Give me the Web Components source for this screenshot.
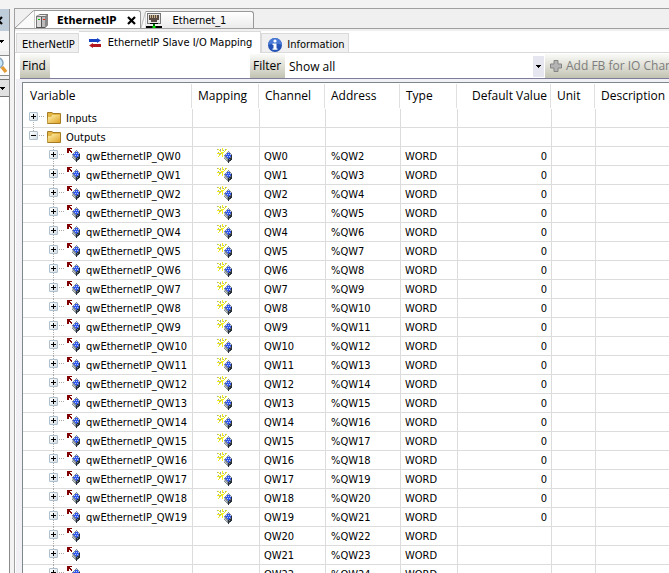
<!DOCTYPE html>
<html lang="en">
<head>
<meta charset="utf-8">
<title>EthernetIP</title>
<style>
  html, body {
    margin: 0;
    height: 100%;
    overflow: hidden;
  }
  body {
    background: #f3f3f3;
    color: #000;
    font: 11px/14px "DejaVu Sans Condensed", Tahoma, sans-serif;
  }
</style>
</head>
<body>
<editor-window></editor-window>

<script>
// 8x12 cube, shared by the output and the mapping icons
const cube = `
      <path d="M0 4 4 0l4 3v5l-4 4-4-4z" fill="#858d95"/>
      <path d="M4 7l4-4v5l-4 4z" fill="#2b3138"/>
      <path d="M1 4l3-3 3 2v2L4 8z" fill="#2f55ea"/>
      <path d="M4 1h1v1H4zM2 3h1v1H2zM4 3h1v1H4zM6 3h1v1H6zM3 5h1v1H3zM5 5h1v1H5z" fill="#b4caff"/>
      <path d="M0 5h1v2H0zM1 7h1v1H1zM2 8h1v1H2z" fill="#c2c9cf"/>
      <path d="M5 8h1v1H5zM6 6h1v1H6zM5 10h1v1H5z" fill="#74808c"/>`;

const icons = {
  device: `<svg width="14" height="16" viewBox="0 0 14 16">
      <path d="M1 3 5 1h8v11l-3 3H1z" fill="#777"/>
      <path d="M2 4h4v10H2z" fill="#ddd"/><path d="M7 4h3v10H7z" fill="#bbb"/>
      <path d="M2 3 5 2h7l-2 1z" fill="#eee"/><path d="M10 4l3-2v10l-3 3z" fill="#888"/>
      <path d="M3 6h2v1H3z" fill="#0c0"/><path d="M8 6h2v1H8z" fill="#e22"/>
      <path d="M6 4h1v11H6zM1 14h9v1H1z" fill="#555"/></svg>`,
  port: `<svg width="16" height="16" viewBox="0 0 16 16" shape-rendering="crispEdges">
      <path d="M1 0h14v11H1z" fill="#777"/><path d="M2 1h12v9H2z" fill="#e8e8e8"/>
      <path d="M3 2h10v5h-2v2H5V7H3z" fill="#5a4c45"/>
      <path d="M4 2h1v3H4zM6 2h1v3H6zM8 2h1v3H8zM10 2h1v3h-1z" fill="#c9b48a"/>
      <path d="M4 10h8v1H4zM0 13h16v2H0z" fill="#000"/><path d="M7 11h2v2H7zM6 13h4v2H6z" fill="#070"/><path d="M7 13h2v2H7z" fill="#0d0"/></svg>`,
  arrows: `<svg width="14" height="10" viewBox="0 0 14 10">
      <path d="M1 1h8V0l4 2.500L9 5V4H1z" fill="#1741c4"/><path d="M13 6H5V5L1 7.500 5 10V9h8z" fill="#b41620"/></svg>`,
  info: `<svg width="16" height="16" viewBox="0 0 16 16">
      <circle cx="8" cy="8" r="7" fill="#2452b5"/><path d="M1 8a7 7 0 0 1 14 0q-7-3-14 0z" fill="#4a7ad6"/>
      <circle cx="8" cy="4" r="1.6" fill="#fff"/><path d="M5.500 6.500h4v5h1v1.300h-5v-1.300h1V8h-1z" fill="#fff"/></svg>`,
  close: `<svg width="9" height="9" viewBox="0 0 9 9"><path d="M1 1l7 7M8 1l-7 7" stroke="#000" stroke-width="2.200"/></svg>`,
  plus: `<svg width="12" height="12" viewBox="0 0 12 12"><path d="M4 .5h4V4h3.500v4H8v3.500H4V8H.5V4H4z" fill="#b4b4b4" stroke="#858585"/></svg>`,
  caret: `<svg width="5" height="3" viewBox="0 0 5 3" shape-rendering="crispEdges"><path d="M0 0h5v1H4v1H3v1H2V2H1V1H0z"/></svg>`,
  search: `<svg width="14" height="18" viewBox="0 0 14 18">
      <circle cx="4" cy="6" r="5" fill="#c8e6fa" stroke="#8aa5bb" stroke-width="1.500"/><path d="M8 10l4 5" stroke="#e49a35" stroke-width="3.500"/></svg>`,
  folder: `<svg width="16" height="14" viewBox="0 0 16 14">
      <defs><linearGradient id="f" x2="1" y2="1"><stop stop-color="#fff3b0"/><stop offset="1" stop-color="#dfa328"/></linearGradient></defs>
      <path d="M1 12V2q0-1 1-1h4l1 1h7q1 0 1 1v9q0 1-1 1H1.500z" fill="#a57c24"/>
      <path d="M2 2h4l1 1h7v1H6L5 6H2z" fill="#e4b744"/><path d="M2 6h3l1-2h8v8H1.500z" fill="url(#f)"/></svg>`,
  output: `<svg width="16" height="16" viewBox="0 0 16 16" shape-rendering="crispEdges">
      <path d="M1 0h5v1H4v1h1v1h1v2H5V4H4V3H3v2H1z" fill="#800000"/>
      <g transform="translate(6 2)">${cube}</g></svg>`,
  mapping: `<svg width="16" height="16" viewBox="0 0 16 16" shape-rendering="crispEdges">
      <path d="M5 0h1v3H5zM1 1h1v1H1zM2 2h1v1H2zM3 3h1v1H3zM0 5h3v1H0zM2 7h1v1H2zM1 8h1v1H1zM4 4h2v2H4zM7 3h1v1H7zM8 2h1v1H8zM9 1h1v1H9zM6 4h1v1H6zM3 6h1v1H3zM5 6h1v3H5z" fill="#f2ee17"/>
      <path d="M0 1h1v1H0zM3 1h1v2H3zM8 1h1v1H8zM1 4h1v1H1zM2 6h1v1H2zM3 5h1v1H3zM6 2h1v1H6z" fill="#a9a98c"/>
      <g transform="translate(7 3)">${cube}</g></svg>`
};

class UiIcon extends HTMLElement {
  connectedCallback() {
    this.attachShadow({ mode: 'open' });
    this.shadowRoot.innerHTML = `
      <style>
        :host { display: inline-flex; flex: none; }
        svg { display: block; }
      </style>
      ${icons[this.getAttribute('name')]}
    `;
  }
}

class SideStrip extends HTMLElement {
  constructor() {
    super();
    this.attachShadow({ mode: 'open' });
    this.shadowRoot.innerHTML = `
      <style>
        :host {
          display: flex;
          flex-direction: column;
          flex: none;
          width: 9px;
          overflow: hidden;
          border-right: 1px solid #8c8c8c;
          background: #f0f0f0;
        }
        button {
          display: flex;
          align-items: center;
          justify-content: flex-end;
          width: 100%;
          height: 22px;
          padding: 0 6px 0 0;
          border: 0;
          background: #bfcddb;
        }
        .menu { height: 20px; padding-right: 5px; background: #f6f6f6; }
        .find {
          height: 21px;
          margin: 4px 0 3px;
          padding: 0 1px 0 0;
          border: solid #8c8c8c;
          border-width: 1px 0;
          background: #fff;
        }
        .drop { height: 18px; padding-right: 4px; border: solid #777; border-width: 1px 0; background: #e1e1e1; }
        .list { flex: 1; background: #fff; }
      </style>
      <button aria-label="Close panel"><ui-icon name="close"></ui-icon></button>
      <button class="menu" aria-label="Panel menu"><ui-icon name="caret"></ui-icon></button>
      <button class="find" aria-label="Search"><ui-icon name="search"></ui-icon></button>
      <button class="drop" aria-label="Open list"><ui-icon name="caret"></ui-icon></button>
      <div class="list"></div>
    `;
  }
}

class DocTab extends HTMLElement {
  constructor() {
    super();
    this.attachShadow({ mode: 'open' });
    this.shadowRoot.innerHTML = `
      <style>
        :host { display: flex; height: 17px; }
        .slant { flex: none; width: 5px; height: 17px; }
        :host([active]) { height: 18px; }
        :host([active]) .slant { width: 20px; height: 18px; }
        .slant svg { display: block; width: 100%; height: 100%; }
        .slant path { fill: #fafafa; stroke: #999; }
        .body {
          display: flex;
          align-items: center;
          gap: 11px;
          padding: 2px 27px 0 0;
          border: solid #999;
          border-width: 1px 1px 0 0;
          border-radius: 0 3px 0 0;
          background: linear-gradient(#fff, #ebebeb);
        }
        :host([active]) .body {
          gap: 8px;
          padding-right: 4px;
          background: #fff;
          font-weight: bold;
        }
      </style>
      <div class="slant"><svg viewBox="0 0 20 18" preserveAspectRatio="none"><path d="M0 18 17 2q1-1.500 3-1.500V18"/></svg></div>
      <div class="body"><slot></slot></div>
    `;
  }
}

class PageTab extends HTMLElement {
  constructor() {
    super();
    this.attachShadow({ mode: 'open' });
    this.shadowRoot.innerHTML = `
      <style>
        :host { display: flex; }
        button {
          display: flex;
          align-items: center;
          gap: 4px;
          height: 20px;
          padding: 4px 3px 0 5px;
          border: 1px solid #dadada;
          background: #f0f0f0;
          color: inherit;
          font: inherit;
          white-space: nowrap;
        }
        :host([active]) button {
          gap: 6px;
          height: 22px;
          padding: 0 8px 0 9px;
          border-width: 1px 1px 0 0;
          background: #fff;
        }
      </style>
      <button><slot></slot></button>
    `;
  }
}

class MappingToolbar extends HTMLElement {
  constructor() {
    super();
    this.attachShadow({ mode: 'open' });
    this.shadowRoot.innerHTML = `
      <style>
        :host {
          display: flex;
          height: 24px;
          margin-left: 4px;
          overflow: hidden;
          border-bottom: 1px solid #7d7d9b;
          font: 12px/16px "Open Sans", "Segoe UI", sans-serif;
        }
        label, button {
          flex: none;
          box-sizing: border-box;
          padding: 4px 2px;
          background: linear-gradient(#fafaf8, #c3c3b3);
        }
        label[for=find] { width: 30px; }
        label[for=filter] { width: 35px; padding: 4px 3px; }
        input, .select { box-sizing: border-box; min-width: 0; border: 0; background: #fff; font: inherit; }
        input { flex: 200 0 0; padding: 0; outline: 0; }
        .select { display: flex; flex: 260 0 0; align-items: center; }
        select {
          flex: 1;
          min-width: 0;
          height: 100%;
          padding: 2px 4px 0;
          border: 0;
          appearance: none;
          background: none;
          font: inherit;
        }
        .arrow {
          display: flex;
          align-items: center;
          justify-content: center;
          width: 11px;
          height: 21px;
          margin-right: 1px;
          background: #e6e6f0;
        }
        button {
          display: flex;
          align-items: center;
          gap: 4px;
          width: 124px;
          padding: 0 5px;
          overflow: hidden;
          border: 0;
          color: #7d7d7d;
          font: inherit;
          white-space: nowrap;
        }
      </style>
      <label for="find">Find</label>
      <input id="find" type="text">
      <label for="filter">Filter</label>
      <div class="select">
        <select id="filter"><option>Show all</option></select>
        <span class="arrow"><ui-icon name="caret"></ui-icon></span>
      </div>
      <button disabled><ui-icon name="plus"></ui-icon>Add FB for IO Channel</button>
    `;
  }
}

class TreeNode extends HTMLElement {
  connectedCallback() {
    const open = this.hasAttribute('open');
    this.attachShadow({ mode: 'open' });
    this.shadowRoot.innerHTML = `
      <style>
        :host {
          display: flex;
          align-items: center;
          height: 18px;
          padding-left: 6px;
          white-space: nowrap;
        }
        :host([leaf]) { padding-left: 26px; }
        .rail {
          flex: none;
          align-self: flex-start;
          box-sizing: border-box;
          width: 9px;
          height: 19px;
          padding-top: 3px;
          background: repeating-linear-gradient(#aaa 0 1px, #fff 1px 2px) 4px 0 / 1px 100% no-repeat;
        }
        :host([first]) .rail { background-position: 4px 9px; }
        :host([open]) .rail { background-size: 1px 9px; }
        button {
          display: flex;
          width: 9px;
          height: 9px;
          padding: 0;
          border: 1px solid #aebfcd;
          border-radius: 1px;
          background: linear-gradient(135deg, #fff, #d5dde2);
        }
        .stub {
          flex: none;
          align-self: flex-start;
          width: 6px;
          height: 1px;
          margin: 7px 2px 0 0;
          background: repeating-linear-gradient(90deg, #fff 0 1px, #aaa 1px 2px);
        }
        slot { display: block; padding: 2px 0 0 4px; }
      </style>
      <span class="rail">
        <button aria-label="${open ? 'Collapse' : 'Expand'}">
          <svg width="7" height="7" viewBox="0 0 7 7"><path d="M1 3h5v1H1z${open ? '' : 'M3 1h1v5H3z'}"/></svg>
        </button>
      </span>
      <span class="stub"></span>
      <ui-icon name="${this.hasAttribute('leaf') ? 'output' : 'folder'}"></ui-icon>
      <slot></slot>
    `;
  }
}

class MappingTable extends HTMLElement {
  constructor() {
    super();
    this.attachShadow({ mode: 'open' });

    const emptyCells = '<td></td>'.repeat(7);
    let rows = `
      <tr><td><tree-node first>Inputs</tree-node></td>${emptyCells}</tr>
      <tr><td><tree-node open>Outputs</tree-node></td>${emptyCells}</tr>`;

    for (let i = 0; i < 23; i++) {
      // only the first 20 words are mapped to a variable
      const mapped = i < 20;
      rows += `
        <tr>
          <td><tree-node leaf>${mapped ? `qwEthernetIP_QW${i}` : ''}</tree-node></td>
          <td class="map">${mapped ? '<ui-icon name="mapping"></ui-icon>' : ''}</td>
          <td>QW${i}</td>
          <td class="address">%QW${i + 2}</td>
          <td>WORD</td>
          <td class="num">${mapped ? '0' : ''}</td>
          <td></td>
          <td></td>
        </tr>`;
    }

    this.shadowRoot.innerHTML = `
      <style>
        :host {
          display: block;
          flex: 1;
          min-height: 0;
          overflow: hidden;
          border: solid #7d878f;
          border-width: 1px 0 0 1px;
          background: #fff;
        }
        table {
          width: 100%;
          border-collapse: separate;
          border-spacing: 0;
          table-layout: fixed;
        }
        th {
          height: 26px;
          padding: 0 5px;
          background: linear-gradient(#e0e0e0, #e0e0e0) right 1px bottom 1px / 1px 24px no-repeat;
          font: 12px/16px "Open Sans", "Segoe UI", sans-serif;
          text-align: left;
          white-space: nowrap;
        }
        th:first-child { padding-left: 7px; }
        td {
          box-sizing: border-box;
          height: 19px;
          padding: 2px 4px 0;
          border: solid #dcdcdc;
          border-width: 0 1px 1px 0;
          white-space: nowrap;
        }
        td:first-child { padding: 0; }
        td:last-child { border-right: 0; }
        th:last-child { background: none; }
        td.address { padding-left: 5px; }
        .num { text-align: right; }
        td.map { padding: 0 6px 0 4px; }
        .map ui-icon { display: flex; justify-content: center; }
      </style>
      <table>
        <colgroup>
          <col style="width: 170px"><col style="width: 67px"><col style="width: 66px"><col style="width: 75px">
          <col style="width: 57px"><col style="width: 94px"><col style="width: 44px"><col>
        </colgroup>
        <thead>
          <tr>
            <th>Variable</th><th>Mapping</th><th>Channel</th><th>Address</th>
            <th>Type</th><th class="num">Default Value</th><th>Unit</th><th>Description</th>
          </tr>
        </thead>
        <tbody>${rows}</tbody>
      </table>
    `;
  }
}

class EditorWindow extends HTMLElement {
  constructor() {
    super();
    this.attachShadow({ mode: 'open' });
    this.shadowRoot.innerHTML = `
      <style>
        :host {
          display: flex;
          gap: 4px;
          box-sizing: border-box;
          height: 100vh;
          padding-top: 8px;
          overflow: hidden;
        }
        side-strip { margin-top: 1px; }
        main {
          display: flex;
          flex: 1;
          flex-direction: column;
          min-width: 0;
          border: solid #a0a0a0;
          border-width: 1px 0 0 1px;
          background: #f0f0f0;
        }
        .docs {
          display: flex;
          align-items: flex-end;
          height: 19px;
          border-bottom: 1px solid #a0a0a0;
        }
        .close { display: flex; padding: 0 0 0 2px; border: 0; background: none; }
        .pages {
          display: flex;
          align-items: flex-end;
          height: 22px;
          margin-top: 2px;
          padding-left: 1px;
          background: linear-gradient(#dadada, #dadada) bottom / 100% 1px no-repeat #fff;
        }
        .content {
          display: flex;
          flex: 1;
          flex-direction: column;
          min-height: 0;
          padding: 1px 0 0 1px;
          background: #fff;
        }
        .grid {
          display: flex;
          flex: 1;
          min-height: 0;
          padding: 3px 0 0 6px;
          background: #f0f0f5;
        }
      </style>
      <side-strip></side-strip>
      <main>
        <div class="docs">
          <doc-tab active>
            <ui-icon name="device"></ui-icon>
            <span>EthernetIP</span>
            <button class="close" aria-label="Close"><ui-icon name="close"></ui-icon></button>
          </doc-tab>
          <doc-tab>
            <ui-icon name="port"></ui-icon>
            <span>Ethernet_1</span>
          </doc-tab>
        </div>
        <div class="pages">
          <page-tab>EtherNetIP</page-tab>
          <page-tab active><ui-icon name="arrows"></ui-icon><span>EthernetIP Slave I/O Mapping</span></page-tab>
          <page-tab><ui-icon name="info"></ui-icon><span>Information</span></page-tab>
        </div>
        <div class="content">
          <mapping-toolbar></mapping-toolbar>
          <div class="grid"><mapping-table></mapping-table></div>
        </div>
      </main>
    `;
  }
}

customElements.define('ui-icon', UiIcon);
customElements.define('side-strip', SideStrip);
customElements.define('doc-tab', DocTab);
customElements.define('page-tab', PageTab);
customElements.define('mapping-toolbar', MappingToolbar);
customElements.define('tree-node', TreeNode);
customElements.define('mapping-table', MappingTable);
customElements.define('editor-window', EditorWindow);
</script>
</body>
</html>
